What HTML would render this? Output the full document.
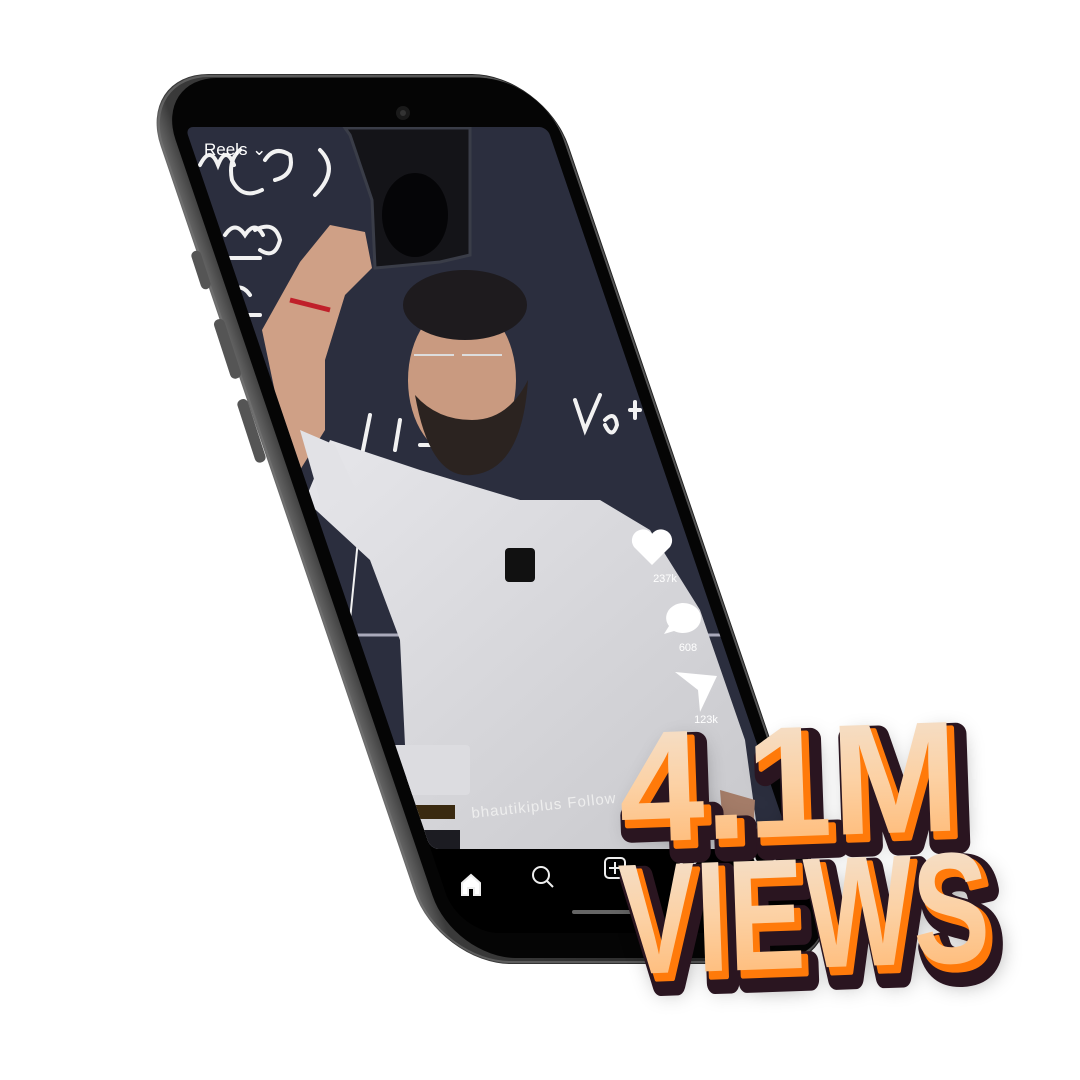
<!DOCTYPE html>
<html><head><meta charset="utf-8"><style>
html,body{margin:0;padding:0;background:#fff;width:1080px;height:1080px;overflow:hidden}
svg{display:block}
</style></head><body>
<svg width="1080" height="1080" viewBox="0 0 1080 1080" xmlns="http://www.w3.org/2000/svg">
<defs>
<linearGradient id="body" x1="0" y1="0" x2="1" y2="0">
<stop offset="0" stop-color="#6a6a6a"/><stop offset="0.05" stop-color="#3a3a3a"/><stop offset="1" stop-color="#222"/>
</linearGradient>
<linearGradient id="txt" x1="0" y1="0" x2="0" y2="1">
<stop offset="0" stop-color="#f1e4d6"/><stop offset="0.5" stop-color="#fcd1a4"/><stop offset="1" stop-color="#ffb46a"/>
</linearGradient>
<linearGradient id="shirt" x1="0" y1="0" x2="1" y2="1">
<stop offset="0" stop-color="#e6e6ea"/><stop offset="1" stop-color="#c8c8cc"/>
</linearGradient>
<clipPath id="scr"><rect transform="matrix(1,0,0.34,1,0,0)" x="142" y="127" width="362" height="722" rx="8"/></clipPath>
<filter id="sh" x="-20%" y="-20%" width="140%" height="160%"><feGaussianBlur stdDeviation="12"/></filter>
</defs>

<g transform="matrix(1,0,0.34,1,0,0)">
<rect x="111" y="74" width="408" height="890" rx="72" fill="url(#body)"/>
<rect x="113" y="76" width="404" height="886" rx="70" fill="none" stroke="#777" stroke-width="2" opacity="0.6"/>
<rect x="128" y="78" width="388" height="880" rx="62" fill="#050505"/>
<rect x="142" y="127" width="362" height="806" rx="40" fill="#000"/>
</g>
<rect x="196" y="250" width="10" height="40" rx="5" fill="#555" transform="rotate(-18 201 270)"/>
<rect x="222" y="318" width="11" height="62" rx="5" fill="#555" transform="rotate(-18 227 349)"/>
<rect x="246" y="398" width="11" height="66" rx="5" fill="#555" transform="rotate(-18 251 431)"/>
<circle cx="403" cy="113" r="7" fill="#1a1a1a"/><circle cx="403" cy="113" r="3" fill="#333"/>

<g clip-path="url(#scr)">
<rect x="0" y="120" width="1000" height="740" fill="#2b2e3e"/>
<g fill="none" stroke="#f2f2f2" stroke-width="4" stroke-linecap="round">
<path d="M200 165 q10 -20 18 0 q8 -20 16 0 M240 150 q-12 10 -8 30 q10 20 30 10 M265 160 q10 -15 25 -5 q5 20 -15 25 M320 150 q20 20 -5 45"/>
<path d="M225 235 q10 -15 20 0 q10 -15 18 0 M255 230 q20 -10 25 10 q-5 20 -20 10 M230 258 h30"/>
<path d="M225 295 q15 -15 25 0 M230 315 h30"/>
<path d="M575 400 l10 30 l15 -35 M605 420 q10 -10 12 5 q-5 15 -12 0 M630 410 h10 M635 402 v16"/>
<path d="M370 415 l-8 40 M400 420 l-5 30 M420 445 h25"/>
<path d="M365 470 l-20 200" stroke-width="2"/>
<path d="M345 635 h400" stroke-width="3" stroke="#aab"/>
</g>
<path d="M345 128 L470 128 L470 255 L440 262 L375 268 L372 200 L350 135Z" fill="#141418" stroke="#3a3d48" stroke-width="3"/>
<ellipse cx="415" cy="215" rx="33" ry="42" fill="#050507"/>
<path d="M330 440 L420 470 L520 500 L600 500 L650 530 L700 610 L745 740 L760 850 L410 850 L400 640 L370 560 L305 500 Z" fill="url(#shirt)"/>
<path d="M262 330 L300 262 L330 225 L365 232 L372 268 L345 295 L325 360 L325 430 L300 470 L285 440 Z" fill="#cfa086"/>
<path d="M290 300 L330 310" stroke="#c0202a" stroke-width="5"/>
<path d="M300 430 L335 445 L360 500 L320 500 Z" fill="#e2e2e6"/>
<ellipse cx="462" cy="380" rx="54" ry="78" fill="#c99a80"/>
<ellipse cx="465" cy="305" rx="62" ry="35" fill="#1e1b1e"/>
<path d="M415 395 Q430 480 472 475 Q522 470 528 380 Q508 420 472 420 Q437 420 415 395Z" fill="#2b2320"/>
<path d="M414 355 h40 M462 355 h40" stroke="#ddd" stroke-width="2"/>
<rect x="505" y="548" width="30" height="34" rx="4" fill="#111"/>
<path d="M720 790 L755 800 L752 850 L725 850Z" fill="#a47c68"/>
<rect x="385" y="745" width="85" height="50" rx="4" fill="#dcdce0"/>
<rect x="415" y="805" width="40" height="14" fill="#3a2a10"/>
<rect x="380" y="830" width="80" height="20" fill="#1c1c22"/>
</g>

<text x="204" y="155" font-family="Liberation Sans" font-size="17" fill="#fff">Reels ⌄</text>
<g fill="#fff" font-family="Liberation Sans" font-size="11" text-anchor="middle">
<path d="M652 565 l-18 -18 a10 10 0 0 1 18 -13 a10 10 0 0 1 18 13z"/>
<text x="665" y="582">237k</text>
<path d="M682 603 a18 15 0 1 1 -8 28 l-10 3 l5 -8 a18 15 0 0 1 13 -23z"/>
<text x="688" y="651">608</text>
<path d="M675 672 L717 676 L700 712 L698 690Z"/>
<text x="706" y="723">123k</text>
</g>
<text x="472" y="818" font-family="Liberation Sans" font-size="15" fill="#eee" letter-spacing="1" transform="rotate(-6 472 818)">bhautikiplus  Follow</text>
<g fill="none" stroke="#eee" stroke-width="2">
<path d="M462 895 v-12 l9 -8 l9 8 v12 h-6 v-7 h-6 v7z" fill="#fff"/>
<circle cx="541" cy="875" r="8"/><path d="M547 881 l6 6"/>
<rect x="605" y="858" width="20" height="20" rx="4"/><path d="M615 862 v12 M609 868 h12"/>
<path d="M688 870 l-9 -9 a6 6 0 0 1 9 -6 a6 6 0 0 1 9 6z"/>
<circle cx="765" cy="855" r="11"/>
</g>
<rect x="572" y="910" width="60" height="4" rx="2" fill="#666"/>

<g font-family="Liberation Sans" font-weight="bold" stroke-linejoin="round" transform="rotate(-2 800 850)">
<g filter="url(#sh)" opacity="0.5"><text x="632" y="850" font-size="158" textLength="340" lengthAdjust="spacingAndGlyphs" fill="#000">4.1M</text>
<text x="628" y="985" font-size="158" textLength="370" lengthAdjust="spacingAndGlyphs" fill="#000">VIEWS</text></g>
<text x="630" y="848" font-size="158" textLength="340" lengthAdjust="spacingAndGlyphs" fill="#2a1520" stroke="#2a1520" stroke-width="22">4.1M</text>
<text x="626" y="980" font-size="158" textLength="370" lengthAdjust="spacingAndGlyphs" fill="#2a1520" stroke="#2a1520" stroke-width="22">VIEWS</text>
<text x="626" y="842" font-size="158" textLength="340" lengthAdjust="spacingAndGlyphs" fill="#ff7a0a" stroke="#ff7a0a" stroke-width="5">4.1M</text>
<text x="622" y="974" font-size="158" textLength="370" lengthAdjust="spacingAndGlyphs" fill="#ff7a0a" stroke="#ff7a0a" stroke-width="5">VIEWS</text>
<text x="621" y="836" font-size="158" textLength="340" lengthAdjust="spacingAndGlyphs" fill="url(#txt)">4.1M</text>
<text x="617" y="968" font-size="158" textLength="370" lengthAdjust="spacingAndGlyphs" fill="url(#txt)">VIEWS</text>
</g>
</svg>
</body></html>
